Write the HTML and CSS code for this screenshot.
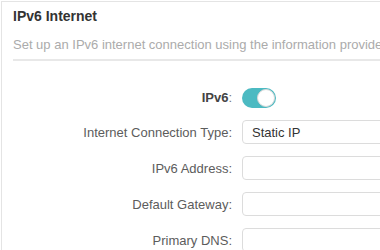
FILE: index.html
```html
<!DOCTYPE html>
<html>
<head>
<meta charset="utf-8">
<link rel="stylesheet" href="styles.css">
</head>
<body>
<div class="card">
  <div class="head">
    <div class="title">IPv6 Internet</div>
    <div class="subtitle">Set up an IPv6 internet connection using the information provided by your ISP.</div>
    <div class="divider"></div>
  </div>
  <div class="form">
    <div class="label strong">IPv6<span class="colon">:</span></div>
    <div class="field"><div class="toggle"><div class="knob"></div></div></div>

    <div class="label">Internet Connection Type:</div>
    <div class="field"><div class="input">Static IP</div></div>

    <div class="label">IPv6 Address:</div>
    <div class="field"><div class="input"></div></div>

    <div class="label">Default Gateway:</div>
    <div class="field"><div class="input"></div></div>

    <div class="label">Primary DNS:</div>
    <div class="field"><div class="input"></div></div>
  </div>
</div>
</body>
</html>
```

FILE: styles.css
```css
html, body {
  margin: 0;
  padding: 0;
  background: #ffffff;
  overflow: hidden;
}
body {
  padding: 1px 0 0 1px;
  font-family: "Liberation Sans", Arial, sans-serif;
}
.card {
  width: 379px;
  height: 249px;
  overflow: hidden;
  border-top: 1px solid #e4e4e4;
  border-left: 1px solid #e4e4e4;
  box-sizing: border-box;
}
.head {
  padding: 4px 0 0 11px;
  overflow: hidden;
}
.title {
  font-size: 14px;
  font-weight: bold;
  line-height: 20px;
  color: #333333;
}
.subtitle {
  margin-top: 10px;
  font-size: 13px;
  line-height: 18px;
  color: #ababab;
  white-space: nowrap;
}
.divider {
  margin-top: 5px;
  height: 2px;
  background: #e8e8e8;
}
.form {
  margin-top: 26px;
  display: grid;
  grid-template-columns: 230px 1fr;
  column-gap: 10px;
  row-gap: 12px;
  grid-auto-rows: 24px;
  grid-template-rows: 21px;
}
.label {
  display: flex;
  align-items: center;
  justify-content: flex-end;
  font-size: 13px;
  color: #5c5c5c;
  white-space: nowrap;
}
.label.strong {
  font-weight: bold;
  color: #444444;
}
.colon {
  font-weight: normal;
  color: #777777;
}
.field {
  display: flex;
  align-items: center;
  overflow: hidden;
}
.toggle {
  width: 34px;
  height: 20px;
  border-radius: 10px;
  background: #4cbac2;
  display: flex;
  justify-content: flex-end;
  align-items: center;
  padding: 0 1px;
  box-sizing: border-box;
}
.knob {
  width: 18px;
  height: 18px;
  border-radius: 50%;
  background: #ffffff;
  box-sizing: border-box;
  border: 1px solid #d8d8d8;
}
.input {
  flex: 0 0 200px;
  height: 24px;
  box-sizing: border-box;
  border: 1px solid #dcdcdc;
  border-radius: 4px;
  background: #ffffff;
  padding-left: 9px;
  display: flex;
  align-items: center;
  font-size: 13px;
  color: #333333;
}
```
